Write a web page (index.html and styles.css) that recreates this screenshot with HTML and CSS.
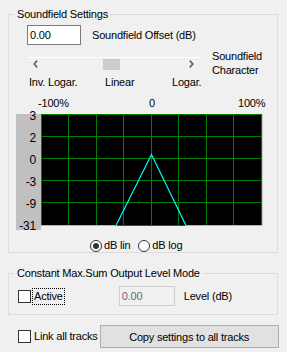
FILE: index.html
```html
<!DOCTYPE html>
<html lang="en">
<head>
  <meta charset="UTF-8" />
  <title>Soundfield Settings</title>
  <link rel="stylesheet" href="styles.css">
</head>
<body>

  <fieldset class="group sound">
    <legend>Soundfield Settings</legend>

    <div class="offset-row">
      <input class="textbox" type="text" value="0.00" />
      <span class="offset-label">Soundfield Offset (dB)</span>
    </div>

    <div class="char-row">
      <div class="char-left">
        <div class="scrollbar">
          <span class="arrow">
            <svg width="5" height="8" viewBox="0 0 5 8"><polyline points="4.2,0.6 1.2,4 4.2,7.4" fill="none" stroke="#606060" stroke-width="1.6"/></svg>
          </span>
          <span class="track"><span class="thumb"></span></span>
          <span class="arrow">
            <svg width="5" height="8" viewBox="0 0 5 8"><polyline points="0.8,0.6 3.8,4 0.8,7.4" fill="none" stroke="#606060" stroke-width="1.6"/></svg>
          </span>
        </div>
        <div class="char-labels">
          <span>Inv. Logar.</span>
          <span>Linear</span>
          <span>Logar.</span>
        </div>
      </div>
      <div class="char-title">Soundfield<br>Character</div>
    </div>

    <div class="pct-row">
      <span>-100%</span>
      <span>0</span>
      <span>100%</span>
    </div>

    <div class="chart">
      <div class="yaxis">
        <div class="ticks">
          <span>3</span>
          <span>2</span>
          <span>0</span>
          <span>-3</span>
          <span>-9</span>
          <span>-31</span>
        </div>
      </div>
      <svg class="plot" width="222" height="112" viewBox="0 0 222 112">
        <rect x="0" y="0" width="222" height="112" fill="#000"/>
        <g stroke="#008000" stroke-width="1">
          <line x1="0.5" y1="0" x2="0.5" y2="112"/>
          <line x1="27.5" y1="0" x2="27.5" y2="112"/>
          <line x1="55.5" y1="0" x2="55.5" y2="112"/>
          <line x1="82.5" y1="0" x2="82.5" y2="112"/>
          <line x1="110.5" y1="0" x2="110.5" y2="112"/>
          <line x1="137.5" y1="0" x2="137.5" y2="112"/>
          <line x1="165.5" y1="0" x2="165.5" y2="112"/>
          <line x1="192.5" y1="0" x2="192.5" y2="112"/>
          <line x1="220.5" y1="0" x2="220.5" y2="112"/>
          <line x1="0" y1="0.5" x2="221" y2="0.5"/>
          <line x1="0" y1="22.5" x2="221" y2="22.5"/>
          <line x1="0" y1="44.5" x2="221" y2="44.5"/>
          <line x1="0" y1="66.5" x2="221" y2="66.5"/>
          <line x1="0" y1="88.5" x2="221" y2="88.5"/>
          <line x1="0" y1="111.5" x2="221" y2="111.5"/>
        </g>
        <line x1="221.5" y1="0" x2="221.5" y2="112" stroke="#c8c8c8"/>
        <polyline points="0,111.5 75,111.5 110.5,40.5 145,111.5 221,111.5" fill="none" stroke="#00ffff" stroke-width="1.2"/>
      </svg>
    </div>

    <div class="radios">
      <label class="radio">
        <svg width="12" height="12" viewBox="0 0 12 12"><circle cx="6" cy="6" r="5.5" fill="#fff" stroke="#333"/><circle cx="6" cy="6" r="3" fill="#333"/></svg>
        dB lin
      </label>
      <label class="radio">
        <svg width="12" height="12" viewBox="0 0 12 12"><circle cx="6" cy="6" r="5.5" fill="#fff" stroke="#333"/></svg>
        dB log
      </label>
    </div>
  </fieldset>

  <fieldset class="group level">
    <legend>Constant Max.Sum Output Level Mode</legend>
    <div class="level-row">
      <span class="checkbox"></span>
      <span class="focus">Active</span>
      <input class="textbox disabled" type="text" value="0.00" disabled />
      <span class="level-label">Level (dB)</span>
    </div>
  </fieldset>

  <div class="bottom-row">
    <span class="checkbox"></span>
    <span class="link-label">Link all tracks</span>
    <button class="copy-btn">Copy settings to all tracks</button>
  </div>

</body>
</html>
```

FILE: styles.css
```css
body {
  margin: 0;
  padding-top: 8px;
  width: 287px;
  height: 352px;
  background-color: #f0f0f0;
  color: #000;
  font-family: "Liberation Sans", Arial, sans-serif;
  font-size: 11px;
  line-height: 13px;
  letter-spacing: -0.2px;
  overflow: hidden;
}

.group {
  margin: 0 9px 0 8px;
  padding: 0;
  border: 1px solid #dcdcdc;
  min-width: 0;
}

.group legend {
  margin-left: 6px;
  padding: 0 2px;
  line-height: 13px;
}

.textbox {
  box-sizing: border-box;
  width: 54px;
  height: 20px;
  margin: 0;
  padding: 0 2px;
  border: 1px solid #7a7a7a;
  background-color: #fff;
  font-family: inherit;
  font-size: 11px;
  letter-spacing: -0.2px;
  color: #000;
}

/* soundfield group */

.offset-row {
  display: flex;
  align-items: center;
  margin-top: 4px;
  padding-left: 18px;
}

.offset-label {
  margin-left: 11px;
}

.char-row {
  display: flex;
  margin-top: 4px;
}

.char-left {
  width: 191px;
  padding-left: 18px;
  box-sizing: border-box;
}

.scrollbar {
  display: flex;
  width: 173px;
  height: 13px;
  margin-top: 8px;
  border-top: 1px solid #fff;
  box-sizing: border-box;
}

.arrow {
  display: flex;
  align-items: center;
  justify-content: center;
  width: 17px;
}

.track {
  flex: 1;
  padding-top: 1px;
}

.thumb {
  display: block;
  width: 17px;
  height: 11px;
  margin-left: 59px;
  background-color: #cdcdcd;
}

.char-labels {
  display: grid;
  grid-template-columns: 76px 67px auto;
  margin-top: 6px;
  padding-left: 2px;
}

.char-title {
  margin-left: 12px;
  line-height: 14px;
}

.pct-row {
  display: grid;
  grid-template-columns: 111px 89px auto;
  margin-top: 8px;
  padding-left: 29px;
}

.chart {
  display: flex;
  align-items: flex-start;
  margin-top: 4px;
  margin-left: 7px;
}

.yaxis {
  width: 25px;
  height: 116px;
  background-color: #c0c0c0;
}

.ticks {
  display: flex;
  flex-direction: column;
  margin-top: -9px;
  padding-right: 5px;
  text-align: right;
  font-size: 12px;
}

.ticks span {
  height: 22px;
  line-height: 22px;
}

.plot {
  display: block;
}

.radios {
  display: flex;
  align-items: center;
  height: 13px;
  margin-top: 9px;
  padding-left: 81px;
}

.radio {
  display: flex;
  align-items: center;
  gap: 2px;
  margin-right: 8px;
}

/* level group */

.level {
  margin-top: 14px;
}

.level-row {
  display: flex;
  align-items: center;
  margin-top: 6px;
  padding-left: 9px;
  padding-bottom: 8px;
}

.checkbox {
  box-sizing: border-box;
  width: 13px;
  height: 13px;
  border: 1px solid #333;
  background-color: #fff;
}

.focus {
  margin-left: 1px;
  padding: 1px 1px;
  border: 1px dotted #000;
}

.textbox.disabled {
  width: 56px;
  height: 20px;
  margin-left: 54px;
  border-color: #cccccc;
  background-color: #f0f0f0;
  color: #6d6d6d;
}

.level-label {
  margin-left: 9px;
}

/* bottom */

.bottom-row {
  display: flex;
  align-items: center;
  margin-top: 10px;
  padding-left: 18px;
}

.link-label {
  margin-left: 3px;
}

.copy-btn {
  box-sizing: border-box;
  width: 179px;
  height: 23px;
  margin-left: 2px;
  border: 1px solid #adadad;
  background-color: #e1e1e1;
  font-family: inherit;
  font-size: 11px;
  letter-spacing: -0.2px;
  color: #000;
}
```
